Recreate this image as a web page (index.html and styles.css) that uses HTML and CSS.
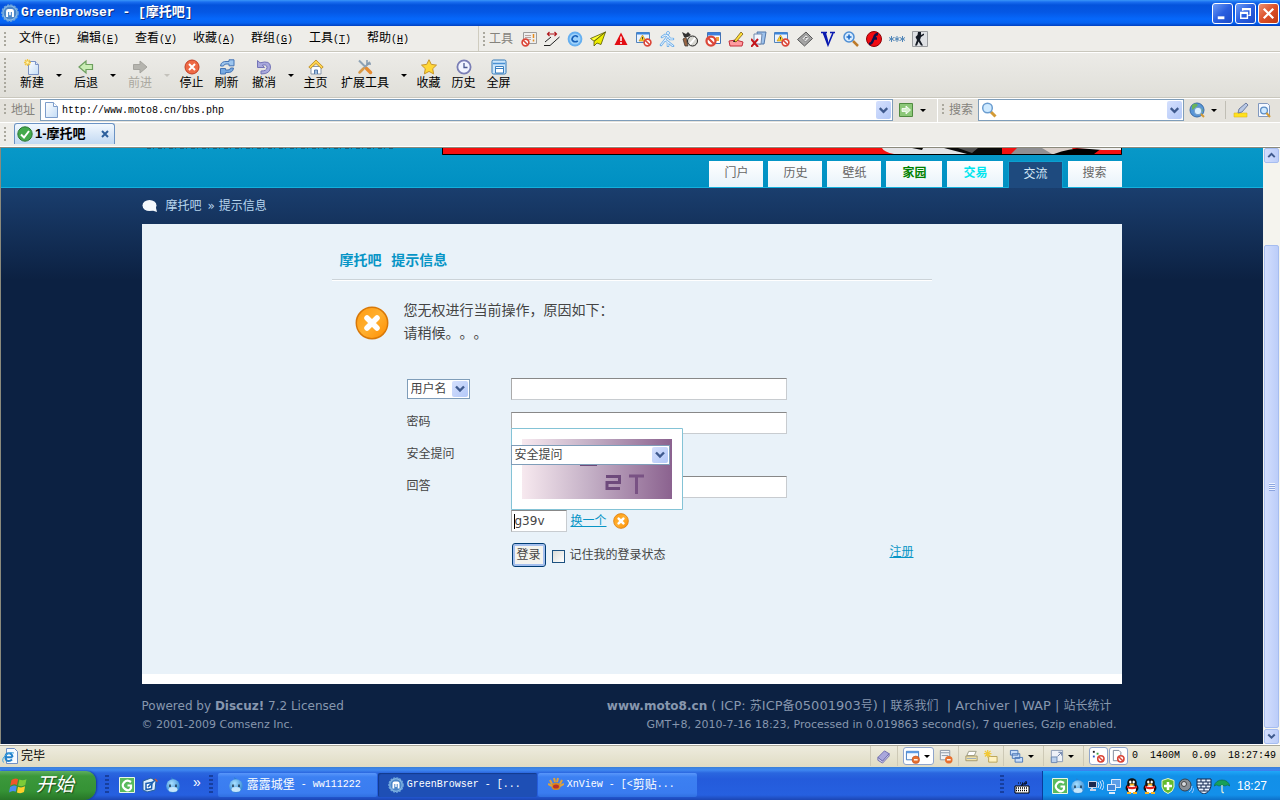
FILE: index.html
```html
<!DOCTYPE html>
<html lang="zh-CN">
<head>
<meta charset="utf-8">
<title>GreenBrowser - [摩托吧]</title>
<link rel="stylesheet" href="styles.css">
</head>
<body>
<svg class="defs" aria-hidden="true">
<defs>
<linearGradient id="gOrange" x1="0" y1="0" x2="1" y2="1"><stop offset="0" stop-color="#ff9a10"/><stop offset=".5" stop-color="#ffb030"/><stop offset="1" stop-color="#ff8c00"/></linearGradient>
<linearGradient id="gBlue" x1="0" y1="0" x2="0" y2="1"><stop offset="0" stop-color="#d8ecff"/><stop offset="1" stop-color="#5a9be0"/></linearGradient>
<linearGradient id="gPage" x1="0" y1="0" x2="1" y2="1"><stop offset="0" stop-color="#fff"/><stop offset="1" stop-color="#c3dcf6"/></linearGradient>
<radialGradient id="gBird" cx=".4" cy=".3" r=".8"><stop offset="0" stop-color="#a8e0ff"/><stop offset="1" stop-color="#1c78cc"/></radialGradient>
<linearGradient id="gCap" x1="0" y1="0" x2="1" y2="0"><stop offset="0" stop-color="#f7e9ef"/><stop offset=".45" stop-color="#c4b0c6"/><stop offset="1" stop-color="#8b628f"/></linearGradient>
</defs>
<symbol id="app" viewBox="0 0 16 16"><circle cx="8" cy="8" r="7" fill="#8dbbe6" stroke="#6ea6dc" stroke-width="1.600" stroke-dasharray="2 1"/><circle cx="8" cy="8" r="5.700" fill="#4a86c8"/><path d="M4.500 11.500V6.500q0-2 2-2h3q2 0 2 2v5H9.700V7H8.700v3H7.300V7h-1v4.500z" fill="#fff"/></symbol>
<symbol id="new" viewBox="0 0 16 16"><path d="M4.500 2.500h7l3 3v10h-10z" fill="url(#gPage)" stroke="#7c93c4"/><path d="M11.500 2.500v3h3" fill="#dce8f8" stroke="#7c93c4"/><path d="M3.500 0v7M0 3.500h7M1 1l5 5M6 1L1 6" stroke="#f2c744" stroke-width="1.300"/><circle cx="3.500" cy="3.500" r="1.200" fill="#fff6b8"/></symbol>
<symbol id="back" viewBox="0 0 16 16"><path d="M1 8l7-6v3.500h6.500v5H8V14z" fill="#c9edb4" stroke="#6d9f5e" stroke-width="1.200"/></symbol>
<symbol id="fwd" viewBox="0 0 16 16"><path d="M15 8L8 2v3.500H1.500v5H8V14z" fill="#b5b4ae" stroke="#a5a49e"/></symbol>
<symbol id="stop" viewBox="0 0 16 16"><circle cx="8" cy="8" r="7" fill="#ee6945" stroke="#c33d22"/><path d="M5 5l6 6M11 5l-6 6" stroke="#fff" stroke-width="2"/></symbol>
<symbol id="refresh" viewBox="0 0 16 16"><path d="M1.500 7Q2 2 8 2.500h2V.8l5 0v6h-5V5H7Q5 5 4.500 7z" fill="#9cc5ee" stroke="#4574b5"/><path d="M14.500 9Q14 14 8 13.500H6.500V15h-5V9.500h5V11H9q2.500 0 2.500-2z" fill="#75a9e2" stroke="#4574b5"/></symbol>
<symbol id="undo" viewBox="0 0 16 16"><path d="M1.500 1.500v7h7L6.300 6.200Q11 5 11 8.500T5 12v3q9.500 0 9.500-7T4 3.800z" fill="#a9a9dd" stroke="#7474b7"/></symbol>
<symbol id="home" viewBox="0 0 16 16"><path d="M3 7.500h10V15H3z" fill="#fff" stroke="#8999ad"/><path d="M8 1L.8 8l1.700 1.500L8 4.500l5.500 5L15.200 8z" fill="#ffd34d" stroke="#b58518" stroke-width=".8"/><path d="M6.500 15v-4h3v4" fill="#9abce0" stroke="#5479a7"/></symbol>
<symbol id="wrench" viewBox="0 0 16 16"><path d="M2 1.500l7 7M13 3L3 13" stroke="#8da2b5" stroke-width="2"/><path d="M10 1v4h4" stroke="#8298ad" fill="none" stroke-width="1.500"/><path d="M9.500 9.500l4 4" stroke="#e58b30" stroke-width="3.500" stroke-linecap="round"/><path d="M2.500 13.500l4-4" stroke="#d99a48" stroke-width="2.500" stroke-linecap="round"/></symbol>
<symbol id="star" viewBox="0 0 16 16"><path d="M8 .7l2.300 4.700 5.200.7-3.800 3.600.9 5.200L8 12.400l-4.600 2.500.9-5.200L.5 6.100l5.200-.7z" fill="#ffd736" stroke="#c7952a"/></symbol>
<symbol id="clock" viewBox="0 0 16 16"><circle cx="8" cy="8" r="6.600" fill="#f2f5ff" stroke="#7a7eb5" stroke-width="1.800"/><path d="M8 4v4.500h3.500" fill="none" stroke="#4c5a91" stroke-width="1.300"/></symbol>
<symbol id="full" viewBox="0 0 16 16"><rect x="1" y="1" width="14" height="14" rx="1.500" fill="#cde6fb" stroke="#357ab8"/><path d="M2 4.500h12" stroke="#4a90d2" stroke-width="1.500"/><path d="M4.500 7.500h8V14h-8z" fill="#fff" stroke="#3b7fbf"/><path d="M5 9.500h7" stroke="#3b7fbf"/></symbol>
<symbol id="no" viewBox="0 0 16 16"><circle cx="8" cy="8" r="6" fill="#fff" stroke="#db4739" stroke-width="3"/><path d="M4 4l8 8" stroke="#db4739" stroke-width="3"/></symbol>
<symbol id="formno" viewBox="0 0 16 16"><path d="M2.500 1.500h13v11h-13z" fill="#eee" stroke="#9c9c9c"/><path d="M4 4.500h6M4 6.500h6M4 8.500h6" stroke="#b8a3a0"/><path d="M12.500 3v4M12.500 8.500v2" stroke="#e58b1c" stroke-width="1.500"/><use href="#no" x="0" y="7" width="9" height="9"/></symbol>
<symbol id="measure" viewBox="0 0 16 16"><path d="M4 3h8M5.500 1L3.500 3l2 2M10.500 1l2 2-2 2" stroke="#b0171d" fill="none" stroke-width="1.200"/><path d="M0 14.500h6L15.500 6M1 11l6-5" stroke="#222" fill="none"/></symbol>
<symbol id="copy" viewBox="0 0 16 16"><circle cx="8" cy="8" r="7.400" fill="#65aff0"/><circle cx="8" cy="8" r="5.500" fill="#9ed2fb"/><path d="M10.800 6Q8 3.500 6 6t0 4 4.800 0" fill="none" stroke="#155fb8" stroke-width="1.700"/></symbol>
<symbol id="plane" viewBox="0 0 16 16"><path d="M15.500 1L.5 7.500 4 10.200z" fill="#ffff30" stroke="#555600" stroke-width=".8"/><path d="M15.500 1L4 10.500V15l3-3 4 1.500z" fill="#ecec00" stroke="#555600" stroke-width=".8"/></symbol>
<symbol id="warn" viewBox="0 0 16 16"><path d="M8 1.500L14.500 14h-13z" fill="#e30d13"/><path d="M8 5.500v4.500M8 11v2" stroke="#fff" stroke-width="1.500"/></symbol>
<symbol id="winno" viewBox="0 0 16 16"><path d="M.5 1.500h13v10H.5z" fill="#eaf3ff" stroke="#4f82bd"/><path d="M1 2.500h12" stroke="#3a85db" stroke-width="2"/><path d="M6.500 4l3.500 6H3z" fill="#ffd22c" stroke="#b88912" stroke-width=".6"/><path d="M6.500 6v2.500" stroke="#443"/><use href="#no" x="7" y="7" width="9" height="9"/></symbol>
<symbol id="run" viewBox="0 0 16 16"><path d="M9 5L6 9l3 2v4M6 9l-4 5M3 6l3-2 3 1 2 3h3M9 11l5 4" fill="none" stroke="#75b2ea" stroke-width="2.600" stroke-linecap="round"/><path d="M9 5L6 9l3 2v4M6 9l-4 5M3 6l3-2 3 1 2 3h3M9 11l5 4" fill="none" stroke="#edf6ff"/><circle cx="9" cy="2" r="1.500" fill="#fff" stroke="#75b2ea"/></symbol>
<symbol id="cam" viewBox="0 0 16 16"><path d="M0 1l4 2 2-2 3 3-3 2H2z" fill="#333"/><path d="M4 6l2 9H3L1 8z" fill="#9a6542" stroke="#333" stroke-width=".7"/><ellipse cx="10.500" cy="10" rx="5" ry="5" fill="#d6d6d0" stroke="#222"/><path d="M8 13Q11 10 13 7" stroke="#fff" stroke-width="2" fill="none"/></symbol>
<symbol id="blockwin" viewBox="0 0 16 16"><path d="M2.500 1.500h13v11h-13z" fill="#fff" stroke="#4272b5"/><path d="M3 3h12" stroke="#3d7fda" stroke-width="3"/><path d="M11 6h3v4h-3z" fill="#f3a13a"/><use href="#no" x="0" y="4" width="12" height="12"/></symbol>
<symbol id="eraser" viewBox="0 0 16 16"><path d="M1 10l7-1 7 2-1 4H2z" fill="#ff9ba0" stroke="#c42f3a"/><path d="M6 10L13 1l2 2-7 8z" fill="#ffe03a" stroke="#7a5a12" stroke-width=".8"/><path d="M5 11l1-2 1.500 2z" fill="#222"/></symbol>
<symbol id="delpage" viewBox="0 0 16 16"><path d="M6 1h9l-2 12H8z" fill="#9fc3ec" stroke="#5278ab"/><path d="M3 3h8l-1 10H3z" fill="#f2f7ff" stroke="#7189ad"/><path d="M0 8l7 8M7 8l-7 8" stroke="#c4161c" stroke-width="2"/></symbol>
<symbol id="disk" viewBox="0 0 16 16"><path d="M9 1l6.500 6.500L7.500 15 .5 8.500z" fill="#a5a5a5" stroke="#555"/><path d="M9 3.500l3.500 3.500-4 4L5 7.500z" fill="#e3e3e3" stroke="#777" stroke-width=".8"/><path d="M8 6.500h2.500M7 8h2" stroke="#555" stroke-width=".8"/></symbol>
<symbol id="vee" viewBox="0 0 16 16"><path d="M1 1.500h6M10 1.500h5M3.500 2L8 14 13 2" fill="none" stroke="#0a1ab0" stroke-width="1.600"/><path d="M3 2l5 12V9L6 2z" fill="#0a1ab0"/></symbol>
<symbol id="zoom" viewBox="0 0 16 16"><path d="M10 10l5 5" stroke="#bd7a2a" stroke-width="2.500"/><circle cx="6" cy="6" r="5" fill="#d8ecff" stroke="#4e8ed4" stroke-width="1.500"/><path d="M6 3.500v5M3.500 6h5" stroke="#1e6cc8" stroke-width="1.600"/></symbol>
<symbol id="flash" viewBox="0 0 16 16"><circle cx="8" cy="8" r="7.500" fill="#f20b12" stroke="#8d0006"/><path d="M12 3Q9 3 8 7L7 9q-1 4-4 4M8 7.500h3" fill="none" stroke="#10104a" stroke-width="2.400"/></symbol>
<symbol id="stars" viewBox="0 0 16 16"><path d="M2.500 5v6M0 6.500l5 3M5 6.500l-5 3M8 5v6M5.500 6.500l5 3M10.500 6.500l-5 3M13.500 5v6M11 6.500l5 3M16 6.500l-5 3" stroke="#5186b8"/></symbol>
<symbol id="cs" viewBox="0 0 16 16"><path d="M.5.5h15v15H.5z" fill="#dfe1e4" stroke="#9b9da0"/><path d="M6 1h3v3l3-1.500v1.500L9 6 8 9l3 5.500H9L6.500 10.500 5 14.500H3L5 9 3.500 6l2-2z" fill="#151a24"/></symbol>
<symbol id="page" viewBox="0 0 16 16"><path d="M2.500.5h8l4 4v11h-12z" fill="url(#gPage)" stroke="#7d9dcb"/><path d="M10.500.5v4h4" fill="#fff" stroke="#7d9dcb"/></symbol>
<symbol id="go" viewBox="0 0 16 16"><path d="M1.500 1.500h13v13h-13z" fill="#8cc878" stroke="#508b40"/><path d="M4 6.500h4V4l4.500 4L8 12V9.500H4z" fill="#d8f2cf" stroke="#fff" stroke-width=".8"/></symbol>
<symbol id="lens" viewBox="0 0 16 16"><path d="M9.500 9.500l5 5" stroke="#d39a35" stroke-width="3"/><circle cx="6.500" cy="6" r="4.800" fill="#cfeaff" stroke="#6b9dd0" stroke-width="1.500"/></symbol>
<symbol id="globe" viewBox="0 0 16 16"><circle cx="8" cy="8" r="7" fill="#5795d8" stroke="#386ca8"/><path d="M3 3q4-3 6 0l-3 3-3 2zM11 5l3 3-2 5z" fill="#69b35a"/><circle cx="9" cy="9" r="3.800" fill="#d9efff" stroke="#6e9bc9"/><path d="M12 12l3 3" stroke="#d39a35" stroke-width="2"/></symbol>
<symbol id="marker" viewBox="0 0 16 16"><path d="M1 11h13v4H1z" fill="#ffe11f" stroke="#e0ba18" stroke-width=".6"/><path d="M5 11l1-4 7-6 2 2-6 7z" fill="#b8c8e5" stroke="#6d7c9f"/></symbol>
<symbol id="find" viewBox="0 0 16 16"><path d="M2.500 1.500h9l2 2v11h-11z" fill="#f4f8ff" stroke="#8198be"/><circle cx="8" cy="8.500" r="3.400" fill="#cfe9ff" stroke="#5c8dc5" stroke-width="1.300"/><path d="M10.500 11l3.500 4" stroke="#d39a35" stroke-width="2"/></symbol>
<symbol id="check" viewBox="0 0 16 16"><circle cx="8" cy="8" r="7.200" fill="#43a94b" stroke="#2a7632"/><path d="M4 8.500l3 3 5-6.500" fill="none" stroke="#fff" stroke-width="2"/></symbol>
<symbol id="chev" viewBox="0 0 16 16"><path d="M4 5.500l4 4 4-4" fill="none" stroke="#3f5a8e" stroke-width="2.400"/></symbol>
<symbol id="chevup" viewBox="0 0 16 16"><path d="M4 10l4-4 4 4" fill="none" stroke="#3f5a8e" stroke-width="2.400"/></symbol>
<symbol id="bubble" viewBox="0 0 16 16"><ellipse cx="7.500" cy="7.500" rx="7" ry="5.500" fill="#f4f8fc"/><path d="M9 12l6 2-1.500-6z" fill="#f4f8fc"/></symbol>
<symbol id="err" viewBox="0 0 34 34"><circle cx="17" cy="17" r="15.700" fill="url(#gOrange)" stroke="#d87808" stroke-width="1.500"/><path d="M12 12l10 10M22 12L12 22" stroke="#fff" stroke-width="5.500" stroke-linecap="round"/></symbol>
<symbol id="ie" viewBox="0 0 16 16"><path d="M4.500.5h8l3 3v12h-11z" fill="#f7fbff" stroke="#6f8fc4"/><path d="M10.500 9.200H3.500q0-4 3.300-4t3.700 4M10 11.500Q8.500 13 6.800 13 3.500 13 3.500 9.200" fill="none" stroke="#2382cc" stroke-width="2"/><path d="M1.500 14.500Q-1 11 4 7t8-2" fill="none" stroke="#43a4e0"/></symbol>
<symbol id="book" viewBox="0 0 16 16"><path d="M2 9l7-7 5 3-7 8z" fill="#a9a7dc" stroke="#6e6cae"/><path d="M2 9v3l5 3 7-7.500V5l-7 8z" fill="#d2d0ee" stroke="#6e6cae"/></symbol>
<symbol id="winminus" viewBox="0 0 16 16"><path d="M1.500 2.500h13v9h-13z" fill="#f6faff" stroke="#3b77be"/><path d="M2 3.500h12" stroke="#5d9ce5" stroke-width="2"/><circle cx="11.500" cy="11.500" r="4" fill="#e7702e" stroke="#b84b19" stroke-width=".6"/><path d="M9.500 11.500h4" stroke="#fff" stroke-width="1.500"/></symbol>
<symbol id="listminus" viewBox="0 0 16 16"><path d="M2.500 1.500h10v10h-10z" fill="#f1f3f6" stroke="#8a94a5"/><path d="M3 4h9M4 7h7" stroke="#8a94a5"/><circle cx="11.500" cy="11.500" r="4" fill="#e7702e"/><path d="M9.500 11.500h4" stroke="#fff" stroke-width="1.500"/></symbol>
<symbol id="drawer" viewBox="0 0 16 16"><path d="M5 2.500h8L11 7H3z" fill="#fff" stroke="#9b9b84"/><path d="M2 7.500h12v5H2z" fill="#f5e6a8" stroke="#a2986f"/><path d="M3 10h10" stroke="#8ba3c5"/></symbol>
<symbol id="folderstar" viewBox="0 0 16 16"><path d="M6 8h9v6H6z" fill="#fff2c0" stroke="#b9a255"/><path d="M5 1v8M1 5h8M2 2l6 6M8 2L2 8" stroke="#f2c936" stroke-width="1.300"/></symbol>
<symbol id="cascade" viewBox="0 0 16 16"><path d="M1.500 1.500h8v5h-8zM3.500 5h8v5h-8zM6.500 9h8v5h-8z" fill="#c8defa" stroke="#4b78b6"/></symbol>
<symbol id="tile" viewBox="0 0 16 16"><path d="M2.500 1.500h12v12h-12z" fill="#eef2f8" stroke="#8a9ab4"/><path d="M2.500 8.500h6v6h-6z" fill="#bad0ed" stroke="#6c87b0"/><path d="M9 8l4-4M10 3.500h3.500V7" stroke="#6078a0" fill="none"/></symbol>
<symbol id="dotsno" viewBox="0 0 16 16"><path d="M2 2h2v2H2z" fill="#222"/><path d="M6 4h2v2H6z" fill="#36a23c"/><path d="M2 7h2v2H2z" fill="#2b58c4"/><use href="#no" x="6" y="6" width="9" height="9"/></symbol>
<symbol id="pageno" viewBox="0 0 16 16"><path d="M2.500 1.500h6l2 2v9h-8z" fill="#fff" stroke="#7c8799"/><use href="#no" x="6" y="6" width="9" height="9"/></symbol>
<symbol id="flag" viewBox="0 0 24 24"><path d="M3 6q4-3 8-1l-1.500 7q-4-2-8 1z" fill="#f0562a"/><path d="M12.500 5.500q4 2 8.500-.5L19.500 12q-4 2.500-8.500.5z" fill="#7ccb38"/><path d="M1.300 14.500q4-3 8-1L8 20q-4-2-8 1z" fill="#4a8df0"/><path d="M10.800 14q4 2 8.500-.5L18 20.500q-4 2.500-8.500.5z" fill="#ffd02a"/></symbol>
<symbol id="g" viewBox="0 0 16 16"><path d="M.5.500h15v15H.5z" fill="#5abb5d" stroke="#e8f8e5"/><path d="M12 5Q8 2 5 5.500t1 6.500 6-1V8.500H8.500" fill="none" stroke="#fff" stroke-width="2.200"/></symbol>
<symbol id="desk" viewBox="0 0 16 16"><path d="M1 4l8-3 5 3-1 9-8 2-4-2z" fill="#dceefd" stroke="#245f9c"/><path d="M4 6.500l6-1-.5 6-5.500 1z" fill="#fff" stroke="#1a5fb0" stroke-width="1.500"/><path d="M6 10l7-7" stroke="#1a5fb0" stroke-width="1.700"/><path d="M13 2l2.500 2.500" stroke="#c85a32" stroke-width="1.500"/></symbol>
<symbol id="bird" viewBox="0 0 16 16"><path d="M7 4L6 0l4 3" fill="#2b7fd0"/><circle cx="8" cy="9" r="6.800" fill="url(#gBird)"/><ellipse cx="8" cy="12.500" rx="4.500" ry="2.500" fill="#c5e6fb"/><path d="M5 7.500v2.500M11 7.500v2.500" stroke="#123" stroke-width="1.300"/></symbol>
<symbol id="paw" viewBox="0 0 16 16"><path d="M4 7q4-3 8 0 2 6-4 6T4 7" fill="#d98a20"/><path d="M2 3l2 4M6 1l1 4M10 1L9 5M14 3l-2 4M0 7l4 2M16 7l-4 2" stroke="#e0a23c" stroke-width="2"/><ellipse cx="8" cy="9.500" rx="3" ry="2" fill="#b8322c"/></symbol>
<symbol id="kbd" viewBox="0 0 16 16"><path d="M1 7h14v7H1z" fill="#fff" stroke="#000"/><path d="M2 9h12M2 11.500h12" stroke="#000" stroke-dasharray="1 1" stroke-width="1.500"/><path d="M8 7V5h4V2" stroke="#000" fill="none"/><path d="M4 4h10" stroke="#000" stroke-dasharray="1 1"/></symbol>
<symbol id="netwave" viewBox="0 0 16 16"><path d="M.5 3.500h8v6h-8z" fill="#1b284e" stroke="#c5d3ea"/><path d="M2 12h6M4 10v2" stroke="#c5d3ea" stroke-width="2"/><path d="M10 4q2 3 0 6M12 3q3 4 0 8M14 2q4 5 0 10" fill="none" stroke="#cfe4ff"/></symbol>
<symbol id="nets" viewBox="0 0 16 16"><path d="M5.500 1.500h9v8h-9z" fill="#5e9fe8" stroke="#dbe9fb"/><path d="M1.500 6.500h8v6h-8z" fill="#4287d8" stroke="#dbe9fb"/><path d="M3 15h6" stroke="#dbe9fb" stroke-width="2"/></symbol>
<symbol id="qq" viewBox="0 0 16 16"><ellipse cx="8" cy="10" rx="6.500" ry="5" fill="#111"/><circle cx="8" cy="5" r="4.800" fill="#111"/><ellipse cx="8" cy="11" rx="4" ry="4" fill="#fff"/><path d="M3 7.500q5 3 10 0v2.500q-5 2.500-10 0z" fill="#e32420"/><ellipse cx="6.300" cy="4" rx="1.200" ry="1.600" fill="#fff"/><ellipse cx="9.700" cy="4" rx="1.200" ry="1.600" fill="#fff"/><ellipse cx="8" cy="6.500" rx="2.500" ry="1" fill="#ffb51c"/><path d="M3 15h4M9 15h4" stroke="#ffb51c" stroke-width="2"/></symbol>
<symbol id="shield" viewBox="0 0 16 16"><path d="M8 .5l6 2V9q-1 5-6 6.500Q3 14 2 9V2.500z" fill="#64bb2f" stroke="#e4f6c8"/><path d="M8 4v8M4 8h8" stroke="#fff" stroke-width="2.500"/></symbol>
<symbol id="sound" viewBox="0 0 16 16"><circle cx="7" cy="7" r="6" fill="#888f96" stroke="#363f4b"/><circle cx="6" cy="6" r="2.500" fill="#d6dadf" stroke="#444"/><path d="M11 14q3-2 3-6M14 15q2-3 2-5" stroke="#9ec8ff" fill="none"/></symbol>
<symbol id="wall" viewBox="0 0 16 16"><path d="M1 1h14v7q-1 6-7 8-6-2-7-8z" fill="#eaf4ff" stroke="#10274f"/><path d="M1 4h14M1 7h14M2 10h12M4 13h8M5 1v3M10 1v3M7 4v3M12 4v3M5 7v3M10 7v3M8 10v3" stroke="#10274f"/></symbol>
<symbol id="umb" viewBox="0 0 16 16"><path d="M0 8q2-6 8-6t8 6q-3-2-5 0-3-2-6 0-2-2-5 0z" fill="#18a05a" stroke="#0b6840" stroke-width=".6"/><path d="M8 7v6q0 2 2 1.500" fill="none" stroke="#d8e8d8" stroke-width="1.300"/></symbol>
</svg>

<header class="titlebar">
  <svg class="ic18"><use href="#app"/></svg>
  <h1>GreenBrowser - [<span>摩托吧</span>]</h1>
  <div class="winbtns">
    <button aria-label="最小化"><svg viewBox="0 0 20 20"><path d="M5 14.500h7" stroke="#fff" stroke-width="3"/></svg></button>
    <button aria-label="还原"><svg viewBox="0 0 20 20"><path d="M7 7V5h8v7h-2M5 9h7v6H5z" fill="none" stroke="#fff" stroke-width="1.500"/><path d="M7 5.500h8M5 9.500h7" stroke="#fff" stroke-width="2"/></svg></button>
    <button class="close" aria-label="关闭"><svg viewBox="0 0 20 20"><path d="M5 5l10 10M15 5L5 15" stroke="#fff" stroke-width="2.400"/></svg></button>
  </div>
</header>

<div class="menubar">
  <nav class="menus">
    <i class="grip"></i>
    <button>文件<span class="m">(<u>F</u>)</span></button><button>编辑<span class="m">(<u>E</u>)</span></button><button>查看<span class="m">(<u>V</u>)</span></button><button>收藏<span class="m">(<u>A</u>)</span></button><button>群组<span class="m">(<u>G</u>)</span></button><button>工具<span class="m">(<u>T</u>)</span></button><button>帮助<span class="m">(<u>H</u>)</span></button>
  </nav>
  <div class="tools">
    <i class="grip"></i><span class="dim">工具</span>
    <div class="toolicons">
      <svg><use href="#formno"/></svg><svg><use href="#measure"/></svg><svg><use href="#copy"/></svg><svg><use href="#plane"/></svg><svg><use href="#warn"/></svg><svg><use href="#winno"/></svg><svg><use href="#run"/></svg><svg><use href="#cam"/></svg><svg><use href="#blockwin"/></svg><svg><use href="#eraser"/></svg><svg><use href="#delpage"/></svg><svg><use href="#winno"/></svg><svg><use href="#disk"/></svg><svg><use href="#vee"/></svg><svg><use href="#zoom"/></svg><svg><use href="#flash"/></svg><svg><use href="#stars"/></svg><svg><use href="#cs"/></svg>
    </div>
  </div>
</div>

<div class="toolbar">
  <i class="grip"></i>
  <button class="tb drop"><svg><use href="#new"/></svg>新建</button><i class="caret"></i>
  <button class="tb drop"><svg><use href="#back"/></svg>后退</button><i class="caret"></i>
  <button class="tb drop" disabled><svg><use href="#fwd"/></svg>前进</button><i class="caret off"></i>
  <button class="tb"><svg><use href="#stop"/></svg>停止</button>
  <button class="tb"><svg><use href="#refresh"/></svg>刷新</button>
  <button class="tb drop"><svg><use href="#undo"/></svg>撤消</button><i class="caret"></i>
  <button class="tb"><svg><use href="#home"/></svg>主页</button>
  <button class="tb wide"><svg><use href="#wrench"/></svg>扩展工具</button><i class="caret"></i>
  <button class="tb"><svg><use href="#star"/></svg>收藏</button>
  <button class="tb"><svg><use href="#clock"/></svg>历史</button>
  <button class="tb"><svg><use href="#full"/></svg>全屏</button>
</div>

<div class="addressbar">
  <div class="addr">
    <i class="grip"></i>
    <label class="dim" for="url">地址</label>
    <div class="combo"><svg><use href="#page"/></svg><input id="url" type="text" value="http://www.moto8.cn/bbs.php"><button class="dd" aria-label="展开地址"><svg><use href="#chev"/></svg></button></div>
    <button class="flat" aria-label="转到"><svg><use href="#go"/></svg><i class="caret"></i></button>
  </div>
  <div class="srch">
    <i class="grip"></i>
    <label class="dim" for="q">搜索</label>
    <div class="combo"><svg><use href="#lens"/></svg><input id="q" type="text"><button class="dd" aria-label="展开搜索"><svg><use href="#chev"/></svg></button></div>
    <button class="flat" aria-label="搜索引擎"><svg><use href="#globe"/></svg><i class="caret"></i></button>
    <i class="sep"></i>
    <button class="flat mk" aria-label="高亮"><svg><use href="#marker"/></svg></button>
    <button class="flat mk" aria-label="查找"><svg><use href="#find"/></svg></button>
  </div>
</div>

<div class="tabbar">
  <i class="grip"></i>
  <div class="tab"><svg><use href="#check"/></svg><b>1-摩托吧</b><button aria-label="关闭标签"><svg viewBox="0 0 8 8"><path d="M1 1l6 6M7 1L1 7" stroke="#2d5f9c" stroke-width="2"/></svg></button></div>
</div>

<main class="viewport">
  <div class="site">
    <div class="top">
      <div class="wrap">
        <div class="strip">
          <div class="cutline"></div>
          <svg class="banner" viewBox="0 0 680 7" preserveAspectRatio="none"><path d="M0 0h680v7H0z" fill="#f5100f"/><path d="M440 0h40l32 0 20 6h-80q-10-2-12-6" fill="#e4e4e6"/><path d="M502 0h75l-4 6h-48z" fill="#0a0a0a"/><path d="M516 0h20l-6 5z" fill="#555"/><path d="M470 0l10 2 1-2zM460 6l40-1" fill="#000"/><path d="M560 0h16l-4 6h-12z" fill="#f5100f"/><path d="M575 0h44l8 6h-58z" fill="#8f8f92"/><path d="M600 0h30l4 6h-24z" fill="#d9cfc9"/><path d="M612 6q20-8 44-5l4-1-8 6z" fill="#000"/><path d="M635 0h45v2h-20z" fill="#eee"/><path d="M.5 0v6.500h679V0" fill="none" stroke="#000"/></svg>
        </div>
        <nav class="nav">
          <a href="#">门户</a><a href="#">历史</a><a href="#">壁纸</a><a href="#" class="green">家园</a><a href="#" class="cyan">交易</a><a href="#" class="on">交流</a><a href="#">搜索</a>
        </nav>
      </div>
    </div>
    <div class="wrap">
      <div class="crumb"><svg><use href="#bubble"/></svg><a href="#">摩托吧</a><span>» 提示信息</span></div>
      <section class="card">
        <div class="notice">
          <h2>摩托吧&nbsp; 提示信息</h2>
          <div class="msg">
            <svg><use href="#err"/></svg>
            <p>您无权进行当前操作，原因如下：<br>请稍候。。。</p>
          </div>
          <form class="login">
            <span class="sel kind"><select aria-label="登录方式"><option>用户名</option></select><svg><use href="#chev"/></svg></span>
            <input class="txt" type="text" aria-label="用户名">
            <label for="pw">密码</label>
            <input class="txt" id="pw" type="password">
            <label for="ques">安全提问</label>
            <div class="quest">
              <svg class="captcha" viewBox="0 0 172 82" role="img" aria-label="验证码"><path d="M.5.5h171v81H.5z" fill="#fff" stroke="#84c3d6"/><path d="M11 11h150v60H11z" fill="url(#gCap)"/><path d="M69 37h17" stroke="#6e4a78" stroke-width="2"/><path d="M95 48.500h13.500v6H96v6h13" fill="none" stroke="#6e4a7c" stroke-width="3"/><path d="M118 48h15M125.500 48v18" fill="none" stroke="#795284" stroke-width="3"/></svg>
              <span class="sel"><select id="ques"><option>安全提问</option></select><svg><use href="#chev"/></svg></span>
            </div>
            <label for="ans">回答</label>
            <input class="txt" id="ans" type="text">
            <div class="field code"><input class="txt" type="text" value="g39v" aria-label="验证码"><a href="#">换一个</a><svg><use href="#err"/></svg></div>
            <div class="field"><button class="submit" type="button">登录</button><input type="checkbox" id="keep"><label for="keep">记住我的登录状态</label></div>
            <a class="reg" href="#">注册</a>
          </form>
        </div>
      </section>
      <footer class="foot">
        <div><p>Powered by <b>Discuz!</b> 7.2 Licensed</p><small>© 2001-2009 Comsenz Inc.</small></div>
        <div class="right"><p><a href="#"><b>www.moto8.cn</b></a> ( ICP: <span>苏</span>ICP<span>备</span>05001903<span>号</span>) | <a href="#"><span>联系我们</span></a> &nbsp;| <a href="#">Archiver</a> | <a href="#">WAP</a> | <a href="#"><span>站长统计</span></a></p><small>GMT+8, 2010-7-16 18:23, Processed in 0.019863 second(s), 7 queries, Gzip enabled.</small></div>
      </footer>
    </div>
  </div>
  <div class="scroll">
    <button aria-label="向上"><svg><use href="#chevup"/></svg></button>
    <i class="track"></i>
    <i class="thumb"></i>
    <button aria-label="向下"><svg><use href="#chev"/></svg></button>
  </div>
</main>

<div class="status">
  <svg><use href="#ie"/></svg><span class="done">完毕</span>
  <div class="stools">
    <span class="cell first"><svg><use href="#book"/></svg></span>
    <span class="cell"><span class="box"><svg><use href="#winminus"/></svg><i class="caret"></i></span><svg><use href="#listminus"/></svg></span>
    <span class="cell"><svg><use href="#drawer"/></svg><svg><use href="#folderstar"/></svg></span>
    <span class="cell"><svg><use href="#cascade"/></svg><i class="caret"></i></span>
    <span class="cell"><svg><use href="#tile"/></svg><i class="caret"></i></span>
    <span class="cell"><span class="box"><svg><use href="#dotsno"/></svg></span><span class="box"><svg><use href="#pageno"/></svg></span></span>
    <span class="m stats"><span>0</span><span>1400M</span><span>0.09</span><span>18:27:49</span></span>
  </div>
</div>

<div class="taskbar">
  <button class="start"><svg><use href="#flag"/></svg>开始</button>
  <i class="tgrip"></i>
  <div class="quick"><svg><use href="#g"/></svg><svg><use href="#desk"/></svg><svg><use href="#bird"/></svg><span>»</span></div>
  <i class="tgrip"></i>
  <div class="tasks">
    <button><svg><use href="#bird"/></svg>露露城堡<span class="m"> - ww111222</span></button>
    <button class="on"><svg><use href="#app"/></svg><span class="m">GreenBrowser - [...</span></button>
    <button><svg><use href="#paw"/></svg><span class="m">XnView - [&lt;</span>剪贴<span class="m">...</span></button>
  </div>
  <i class="tgrip"></i>
  <svg class="kbd"><use href="#kbd"/></svg>
  <div class="tray"><svg><use href="#g"/></svg><svg><use href="#bird"/></svg><svg><use href="#netwave"/></svg><svg><use href="#nets"/></svg><svg><use href="#qq"/></svg><svg><use href="#qq"/></svg><svg><use href="#shield"/></svg><svg><use href="#sound"/></svg><svg><use href="#wall"/></svg><svg><use href="#umb"/></svg><time>18:27</time></div>
</div>
</body>
</html>
```

FILE: styles.css
```css
* { box-sizing: border-box; }
body {
  margin: 0;
  height: 100vh;
  display: flex;
  flex-direction: column;
  overflow: hidden;
  font: 12px/16px "Liberation Sans", "Noto Sans CJK SC", sans-serif;
  text-spacing-trim: space-all;
  color: #000;
  background: #ece9d8;
}
button {
  font: inherit;
  color: inherit;
  background: none;
  border: 0;
  padding: 0;
  white-space: nowrap;
}
svg { display: block; width: 16px; height: 16px; flex: none; }
input, select { font: inherit; color: inherit; }
.defs { position: absolute; width: 0; height: 0; }
.m { font-family: "Liberation Mono", monospace; font-size: 10px; white-space: pre; }
.dim { color: #85837c; }
.grip {
  flex: none;
  width: 2px;
  align-self: stretch;
  margin: 5px 3px 5px 4px;
  background: repeating-linear-gradient(#aaa89e 0 2px, transparent 2px 4px);
}
.caret {
  flex: none;
  width: 0;
  height: 0;
  border: 3px solid transparent;
  border-top-color: #000;
  border-bottom: 0;
}
.caret.off { border-top-color: #c4c2bb; }

/* title */
.titlebar {
  flex: none;
  height: 26px;
  display: flex;
  align-items: center;
  padding: 0 1px;
  background: linear-gradient(#3a97f8 0, #1a6ef0 2px, #0453dc 5px, #0557e4 12px, #0668fb 19px, #0562f0 23px, #003fc0 26px);
  color: #fff;
}
.titlebar .ic18 { width: 18px; height: 18px; }
.titlebar h1 {
  margin: 0 0 0 2px;
  flex: 1;
  font: bold 13px/20px "Liberation Mono", "Noto Sans CJK SC", monospace;
  text-shadow: 1px 1px 0 #0a2d80;
}
.winbtns { display: flex; gap: 2px; }
.winbtns button {
  width: 21px;
  height: 21px;
  border: 1px solid #fff;
  border-radius: 3px;
  background: linear-gradient(135deg, #6d9bf5, #2a5fe0 50%, #1c4bc8);
}
.winbtns svg { width: 19px; height: 19px; }
.winbtns .close { background: linear-gradient(135deg, #ee9070, #dc4f28 50%, #c03a14); }

/* menus */
.menubar {
  flex: none;
  height: 26px;
  display: flex;
  background: #eeede9;
  border-bottom: 1px solid #c9c7bd;
}
.menus, .tools { display: flex; align-items: center; padding-top: 1px; }
.menus { width: 478px; }
.menus > .grip { margin-right: 5px; }
.menus button { width: 58px; }
.tools { border-left: 1px solid #cfccbf; }
.tools > .grip { margin-right: 4px; }
.toolicons { display: flex; gap: 7px; margin-left: 8px; }

/* main toolbar */
.toolbar {
  flex: none;
  height: 46px;
  display: flex;
  align-items: center;
  border-top: 1px solid #fff;
  border-bottom: 1px solid #c9c7bd;
  background: linear-gradient(#ecebe7, #e0dfd9);
}
.toolbar > .grip { margin-right: 6px; }
.tb { width: 35px; display: flex; flex-direction: column; align-items: center; }
.tb.drop { width: 40px; }
.tb.wide { width: 64px; }
.tb:disabled { color: #aaa89f; }
.toolbar .caret { margin: 0 4px; }

/* address */
.addressbar {
  flex: none;
  height: 24px;
  display: flex;
  border-top: 1px solid #fff;
  background: #e4e2dc;
}
.addr, .srch { display: flex; align-items: center; padding-bottom: 1px; }
.addr { flex: 1; }
.srch { width: 343px; border-left: 1px solid #fff; }
.addr > .grip, .srch > .grip { margin-right: 5px; }
.combo {
  flex: 1;
  height: 22px;
  margin-left: 5px;
  display: flex;
  align-items: center;
  padding: 1px 1px 1px 2px;
  border: 1px solid #7f9db9;
  background: #fff;
}
.combo input {
  flex: 1;
  min-width: 0;
  padding: 2px 3px 0;
  border: 0;
  background: none;
  font: 10px/14px "Liberation Mono", monospace;
}
.dd {
  width: 15px;
  height: 18px;
  display: grid;
  place-items: center;
  border-radius: 2px;
  background: linear-gradient(135deg, #d5e0fd, #b3c8f8);
}
.dd svg { width: 15px; height: 15px; }
.flat { display: flex; align-items: center; gap: 6px; margin-left: 5px; }
.addr .flat { padding-right: 11px; }
.sep { width: 1px; height: 18px; margin-left: 8px; background: #c0beb5; }
.mk { margin-left: 7px; }
.srch { padding-right: 8px; }

/* tabs */
.tabbar {
  flex: none;
  height: 25px;
  display: flex;
  align-items: flex-end;
  padding-bottom: 2px;
  border-top: 1px solid #fff;
  border-bottom: 1px solid #fff;
  background: #eeede9;
}
.tabbar > .grip { margin: 4px 4px 2px; }
.tab {
  height: 21px;
  margin-left: 4px;
  display: flex;
  align-items: center;
  gap: 2px;
  padding: 0 5px 0 2px;
  border: 1px solid #6b93c4;
  border-bottom: 0;
  border-radius: 3px 3px 0 0;
  background: linear-gradient(#f2f8fe, #c2d9f2);
}
.tab b { white-space: nowrap; font-size: 13px; }
.tab button { margin-left: 13px; }
.tab button svg { width: 8px; height: 8px; }

/* page area */
.viewport {
  flex: 1;
  min-height: 0;
  display: flex;
  border: 1px solid #8b8a7c;
  border-width: 1px 0 0 1px;
}
.site {
  flex: 1;
  min-width: 0;
  font-family: "DejaVu Sans", "Noto Sans CJK SC", sans-serif;
  background: #0c2142 linear-gradient(#1a3e6e, #0c2142) 0 40px / 100% 92px no-repeat;
}
.wrap { width: 100%; max-width: 981px; margin: 0 auto; padding-right: 1px; }
.top { background: linear-gradient(#0898c8, #0090c2); border-bottom: 1px solid #14b0dc; }
.strip { display: flex; justify-content: space-between; height: 7px; }
.cutline {
  width: 248px;
  height: 1px;
  margin-left: 5px;
  background: repeating-linear-gradient(90deg, #125f80 0 4px, transparent 4px 6px, #125f80 6px 7px, transparent 7px 11px);
}
.banner { width: 680px; height: 7px; }
.nav { display: flex; justify-content: flex-end; gap: 5px; padding-top: 6px; }
.nav a {
  min-width: 54px;
  height: 26px;
  padding: 0 14px;
  line-height: 25px;
  text-align: center;
  text-decoration: none;
  color: #666;
  background: linear-gradient(#fff, #e8f2fa);
}
.nav .green { color: #008000; font-weight: bold; padding: 0 16px; }
.nav .cyan { color: #00e5ee; font-weight: bold; padding: 0 16px; }
.nav .on { color: #d5e8f8; background: #1e4a7e; border: 1px solid #0c9fd0; border-bottom: 0; height: 27px; margin-bottom: -1px; line-height: 24px; }
.crumb {
  height: 36px;
  display: flex;
  align-items: center;
  color: #b8d6ee;
}
.crumb a { color: inherit; text-decoration: none; margin: 0 6px 0 8px; }
.card { min-height: 460px; background: #e9f2f9; border-bottom: 10px solid #fff; }
.notice { max-width: 600px; margin: 0 auto; padding-top: 24px; }
.notice h2 {
  margin: 0;
  padding: 0 8px 7px;
  font-size: 14px;
  line-height: 24px;
  color: #0795c6;
  border-bottom: 1px solid #ccd3d8;
  box-shadow: 0 1px 0 #fff;
}
.msg { display: flex; padding: 19px 0 0 23px; gap: 15px; }
.msg svg { width: 34px; height: 34px; margin-top: 7px; }
.msg p { margin: 0; font-size: 14px; line-height: 23px; color: #444; }
.login {
  display: grid;
  grid-template-columns: 104px 276px 1fr;
  grid-template-rows: 24px 22px 22px 24px 24px 24px;
  row-gap: 10px;
  margin: 33px 0 0 75px;
  color: #444;
}
.login > * { grid-column: 1; }
.login > .txt, .login > .quest, .login > .field { grid-column: 2; margin-left: 0; }
.login > label { line-height: 20px; }
.login > .sel, .login > .sel + .txt { grid-row: 1; }
.login > label:nth-of-type(1), #pw { grid-row: 2; }
.login > label:nth-of-type(2), .quest { grid-row: 3; }
.login > label:nth-of-type(3), #ans { grid-row: 4; }
.login .txt {
  width: 100%;
  height: 22px;
  padding: 0 3px;
  border: 1px solid #c8ccd0;
  border-top-color: #888;
  border-left-color: #aaa;
  background: #fff;
}
.login > .field { display: flex; align-items: center; height: 22px; }
.code { grid-row: 5; gap: 4px; }
.code + .field { grid-row: 6; }
.login .code .txt {
  width: 56px;
  background: linear-gradient(#000, #000) 2px 3px / 1px 15px no-repeat #fff;
}
.login a { color: #0795c6; }
.code svg { margin-left: 2px; }
.sel { position: relative; height: 20px; display: block; }
.sel select {
  width: 100%;
  height: 20px;
  padding: 0 3px;
  appearance: none;
  border: 1px solid #7f9db9;
  border-radius: 0;
  background: #fff;
}
.sel svg {
  position: absolute;
  right: 2px;
  top: 2px;
  border-radius: 2px;
  background: linear-gradient(135deg, #d5e0fd, #b3c8f8);
  pointer-events: none;
}
.kind { width: 63px; margin-top: 1px; }
.quest { position: relative; z-index: 1; }
.quest .sel { width: 159px; margin-top: 1px; }
.captcha { position: absolute; left: 0; top: -16px; width: 172px; height: 82px; }
.submit {
  width: 34px;
  height: 24px;
  margin: 0 6px 0 1px;
  border: 1px solid #003c74;
  border-radius: 3px;
  background: #f4f3ee;
  box-shadow: inset 0 0 0 2px #a4bfee;
}
.field [type="checkbox"] {
  appearance: none;
  width: 13px;
  height: 13px;
  margin: 2px 5px 0 0;
  border: 1px solid #1c5180;
  background: linear-gradient(135deg, #dcdcd7, #fff);
}
.login > .reg { grid-column: 3; grid-row: 6; margin-left: 103px; justify-self: start; line-height: 16px; }
.foot {
  display: flex;
  justify-content: space-between;
  padding: 13px 5px 0 0;
  color: #8797ae;
  line-height: 18px;
}
.foot p { margin: 0; }
.foot a { color: inherit; text-decoration: none; }
.foot small { font-size: 11px; line-height: 20px; }
.right { text-align: right; }
.right p { font-size: 13px; padding-right: 5px; }
.right b, .right span { font-size: 12px; }
.scroll {
  width: 17px;
  display: flex;
  flex-direction: column;
  gap: 1px;
  padding: 0 1px;
  background: #f5f4ee;
}
.scroll button, .thumb {
  border: 1px solid #a6bdf0;
  border-radius: 2px;
  background: linear-gradient(90deg, #d3defd, #bccdf9);
}
.scroll button { height: 15px; display: grid; place-items: center; }
.scroll svg { width: 13px; height: 13px; }
.track { flex: 81; }
.thumb { flex: 484; display: grid; place-items: center; }
.thumb::before { content: ""; width: 6px; height: 8px; background: repeating-linear-gradient(#eef3ff 0 1px, #8ca5e0 1px 2px); }

/* status */
.status {
  flex: none;
  height: 23px;
  display: flex;
  align-items: center;
  padding: 0 4px 0 2px;
  border-top: 1px solid #fff;
  box-shadow: inset 0 1px 0 #aaa89a;
  background: linear-gradient(#eeecdf, #e0dcc4);
}
.done { flex: 1; margin-left: 3px; }
.stools { display: flex; align-items: center; }
.cell {
  display: flex;
  align-items: center;
  gap: 4px;
  height: 20px;
  padding: 0 5px;
  border-left: 1px solid #cdc9b6;
}
.cell.first { padding-right: 6px; }
.cell svg { width: 15px; height: 15px; }
.cell .caret { margin: 0 4px 0 0; }
.box {
  display: flex;
  align-items: center;
  gap: 4px;
  height: 18px;
  padding: 0 1px;
  border: 1px solid #8fa5cc;
  border-radius: 3px;
  background: #fff;
}
.cell .box .caret { margin-right: 2px; }
.box + .box { margin-left: -3px; }
.cell:nth-child(6) { padding-right: 4px; }
.stats { display: flex; gap: 12px; }

/* taskbar */
.taskbar {
  flex: none;
  height: 33px;
  display: flex;
  align-items: center;
  padding-top: 3px;
  color: #fff;
  background: linear-gradient(#3a80d8 0, #3f87f0 3px, #2a66df 6px, #245bdb 12px, #2660e0 28px, #1c46b4 33px);
}
.start {
  width: 96px;
  height: 29px;
  display: flex;
  align-items: center;
  gap: 7px;
  padding-left: 9px;
  border-radius: 0 10px 12px 0;
  background: linear-gradient(#5fae5f 0, #3b983b 5px, #359235 20px, #277527);
  box-shadow: 1px 0 2px #14399a;
  font-size: 19px;
  font-style: italic;
  text-shadow: 1px 1px 1px #1b4d1b;
}
.start svg { width: 20px; height: 20px; }
.tgrip {
  flex: none;
  width: 4px;
  height: 20px;
  margin: 0 5px 0 9px;
  background: repeating-linear-gradient(#173f9f 0 2px, transparent 2px 4px);
}
.quick { display: flex; align-items: center; gap: 7px; margin-left: 5px; }
.quick span { align-self: flex-start; line-height: 10px; margin-left: 5px; font-size: 14px; }
.quick + .tgrip { margin-left: 8px; }
.tasks { flex: 1; display: flex; gap: 1px; }
.tasks button {
  width: 159px;
  height: 24px;
  display: flex;
  align-items: center;
  padding-left: 10px;
  border-radius: 2px;
  background: linear-gradient(#5a97fb, #3c80f2 4px, #3a7cf0 20px, #3070e0);
}
.tasks svg { margin-right: 3px; }
.tasks .on { background: #1e4fb5; box-shadow: inset 1px 1px 1px #123a8c; }
.kbd { margin: 3px 12px 0 5px; }
.tray {
  align-self: stretch;
  margin-top: 1px;
  display: flex;
  align-items: center;
  gap: 2px;
  padding: 0 13px 0 9px;
  border-left: 1px solid #0a3c9c;
  background: linear-gradient(#1fa8f8, #1290e8 5px, #1390ea 24px, #0d70c8);
}
.tray time { margin-left: 5px; font-size: 12px; }
```
